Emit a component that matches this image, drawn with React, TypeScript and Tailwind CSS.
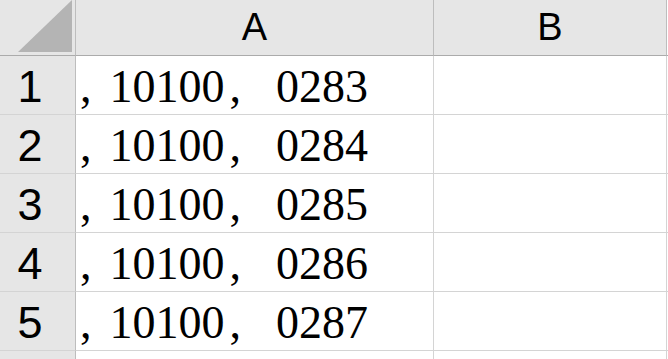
import React from "react";

const rows = ["0283", "0284", "0285", "0286", "0287"];

export default function App() {
  return (
    <div className="w-[668px] h-[359px] overflow-hidden bg-white">
      <div className="grid grid-cols-[76px_358px_233px_1px]">
        {/* header */}
        <div className="relative h-[56px] bg-[#e6e6e6] border-r border-b border-r-[#bdbdbd] border-b-[#ababab]">
          <svg className="absolute left-[18px] top-0" width="54" height="52" viewBox="0 0 54 52">
            <polygon points="54,0 54,52 0,52" fill="#b4b4b4" />
          </svg>
        </div>
        <div className="h-[56px] bg-[#e6e6e6] border-r border-b border-r-[#bdbdbd] border-b-[#ababab] flex items-center justify-center text-[38px] leading-none text-black [font-family:'Liberation_Sans',Arial,sans-serif]">
          <span className="mt-[-2px]">A</span>
        </div>
        <div className="h-[56px] bg-[#e6e6e6] border-r border-b border-r-[#bdbdbd] border-b-[#ababab] flex items-center justify-center text-[38px] leading-none text-black [font-family:'Liberation_Sans',Arial,sans-serif]">
          <span className="mt-[-2px]">B</span>
        </div>
        <div className="h-[56px] bg-white border-b border-b-[#ababab]" />

        {rows.map((r, i) => (
          <React.Fragment key={r}>
            <div className="h-[59px] bg-[#e6e6e6] border-r border-b border-r-[#bdbdbd] border-b-[#d4d4d4] flex items-center justify-center pr-[15px] text-[45px] leading-none text-black [font-family:'Liberation_Sans',Arial,sans-serif]">
              <span className="mt-[2px]">{i + 1}</span>
            </div>
            <div className="h-[59px] border-r border-b border-[#d4d4d4] flex items-center pl-[4px] text-[46px] leading-none text-black whitespace-pre [font-family:'Liberation_Serif','Times_New_Roman',serif]">
              <span className="mt-[4px]">
                ,<span className="inline-block w-[18px]"> </span>10100<span className="inline-block w-[40px] pl-[5px]">,</span> {r}
              </span>
            </div>
            <div className="h-[59px] border-r border-b border-[#d4d4d4]" />
            <div className="h-[59px] border-b border-[#d4d4d4]" />
          </React.Fragment>
        ))}
        <div className="h-[20px] bg-[#e6e6e6] border-r border-r-[#bdbdbd]" />
        <div className="h-[20px] border-r border-[#d4d4d4]" />
        <div className="h-[20px] border-r border-[#d4d4d4]" />
        <div className="h-[20px]" />
      </div>
    </div>
  );
}
